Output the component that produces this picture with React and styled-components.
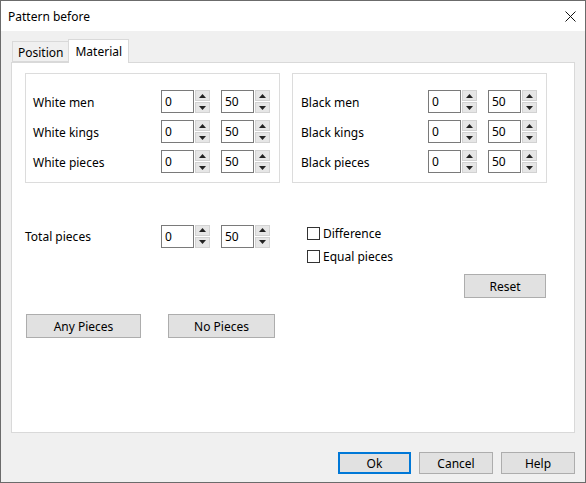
import React from "react";
import styled, { createGlobalStyle, css } from "styled-components";

const Global = createGlobalStyle`
  html, body { margin: 0; padding: 0; background: #f0f0f0; }
  * { box-sizing: border-box; }
  body { font-family: "Noto Sans", "Open Sans", Arial, sans-serif; font-size: 12px; color: #000; }
`;

const Window = styled.div`
  width: 586px;
  height: 483px;
  border: 1px solid #6b6b6b;
  display: flex;
  flex-direction: column;
  background: #f0f0f0;
  overflow: hidden;
`;

const TitleBar = styled.div`
  height: 30px;
  flex: none;
  background: #fff;
  display: flex;
  align-items: center;
  justify-content: space-between;
  padding: 0 9px 0 7px;
  font-size: 12px;
`;

const Body = styled.div`
  flex: 1;
  display: flex;
  flex-direction: column;
  padding: 8px 10px 0 10px;
`;

const TabRow = styled.div`
  display: flex;
  align-items: flex-end;
  height: 23px;
  padding-left: 1px;
  position: relative;
  z-index: 1;
`;

const Tab = styled.div`
  height: ${(p) => (p.$active ? 24 : 21)}px;
  padding: 0 ${(p) => (p.$active ? 6 : 5)}px;
  border: 1px solid #d9d9d9;
  border-bottom: ${(p) => (p.$active ? "none" : "1px solid #d9d9d9")};
  background: ${(p) => (p.$active ? "#fff" : "#f0f0f0")};
  margin-bottom: ${(p) => (p.$active ? -1 : 0)}px;
  display: flex;
  align-items: center;
  padding-top: ${(p) => (p.$active ? 0 : 1)}px;
  ${(p) => !p.$active && css`border-right: none;`}
`;

const Panel = styled.div`
  height: 371px;
  border: 1px solid #d9d9d9;
  background: #fff;
  padding: 10px 13px;
`;

const GroupRow = styled.div`
  display: flex;
  gap: 12px;
`;

const GroupBox = styled.div`
  width: 255px;
  height: 110px;
  border: 1px solid #dcdcdc;
  padding: 16px 0 0 ${(p) => p.$pl}px;
  display: grid;
  grid-template-columns: ${(p) => p.$label}px 33px 16px 44px 16px;
  grid-auto-rows: 23px;
  row-gap: 7px;
  align-content: start;
  align-items: center;
`;

const Label = styled.span`
  white-space: nowrap;
  padding-top: 1px;
`;

const Input = styled.div`
  width: 33px;
  height: 23px;
  border: 1px solid #7a7a7a;
  background: #fff;
  padding-left: 3px;
  display: flex;
  align-items: center;
  justify-self: ${(p) => (p.$second ? "end" : "start")};
`;

const SpinWrap = styled.div`
  width: 16px;
  height: 23px;
  display: flex;
  flex-direction: column;
  gap: 1px;
  padding-left: 1px;
`;

const SpinBtn = styled.div`
  flex: 1;
  background: #e6e6e6;
  border: 1px solid #d2d2d2;
  display: flex;
  align-items: center;
  justify-content: center;
`;

const Arrow = ({ down }) => (
  <svg width="7" height="4" viewBox="0 0 7 4">
    <path d={down ? "M0 0 L7 0 L3.5 4 Z" : "M0 4 L7 4 L3.5 0 Z"} fill="#222" />
  </svg>
);

const Spinner = () => (
  <SpinWrap>
    <SpinBtn><Arrow /></SpinBtn>
    <SpinBtn><Arrow down /></SpinBtn>
  </SpinWrap>
);

const RangeCells = ({ lo, hi }) => (
  <>
    <Input>{lo}</Input>
    <Spinner />
    <Input $second>{hi}</Input>
    <Spinner />
  </>
);

const Middle = styled.div`
  display: flex;
  margin-top: 41px;
`;

const LeftCol = styled.div`
  width: 267px;
  display: flex;
  flex-direction: column;
`;

const TotalRow = styled.div`
  display: grid;
  grid-template-columns: 136px 33px 16px 44px 16px;
  height: 24px;
  align-items: center;
`;

const BtnRow = styled.div`
  display: flex;
  margin-top: 66px;
  padding-left: 1px;
  gap: 27px;
`;

const Button = styled.div`
  width: ${(p) => p.$w}px;
  height: ${(p) => p.$h || 23}px;
  background: #e1e1e1;
  border: 1px solid #adadad;
  display: flex;
  align-items: center;
  justify-content: center;
  font-size: 12px;
  ${(p) =>
    p.$default &&
    css`
      border: 2px solid #0078d7;
    `}
`;

const RightCol = styled.div`
  width: 255px;
  display: flex;
  flex-direction: column;
  padding-left: 15px;
  padding-top: 3px;
`;

const CheckRow = styled.label`
  display: flex;
  align-items: center;
  gap: 3px;
  height: 13px;
  margin-bottom: 10px;
`;

const Box = styled.span`
  width: 13px;
  height: 13px;
  border: 1px solid #333;
  background: #fff;
  flex: none;
`;

const ResetWrap = styled.div`
  display: flex;
  justify-content: flex-end;
  margin-top: 1px;
  padding-right: 1px;
`;

const Footer = styled.div`
  display: flex;
  justify-content: flex-end;
  gap: 8px;
  margin-top: 19px;
`;

const CloseIcon = () => (
  <svg width="11" height="11" viewBox="0 0 11 11">
    <path d="M0.5 0.5 L10.5 10.5 M10.5 0.5 L0.5 10.5" stroke="#111" strokeWidth="1" />
  </svg>
);

const rowsW = [
  ["White men", "0", "50"],
  ["White kings", "0", "50"],
  ["White pieces", "0", "50"],
];
const rowsB = [
  ["Black men", "0", "50"],
  ["Black kings", "0", "50"],
  ["Black pieces", "0", "50"],
];

const Group = ({ rows, pl, label }) => (
  <GroupBox $pl={pl} $label={label}>
    {rows.map(([l, a, b]) => (
      <React.Fragment key={l}>
        <Label>{l}</Label>
        <RangeCells lo={a} hi={b} />
      </React.Fragment>
    ))}
  </GroupBox>
);

export default function App() {
  return (
    <>
      <Global />
      <Window>
        <TitleBar>
          <span>Pattern before</span>
          <CloseIcon />
        </TitleBar>
        <Body>
          <TabRow>
            <Tab>Position</Tab>
            <Tab $active>Material</Tab>
          </TabRow>
          <Panel>
            <GroupRow>
              <Group rows={rowsW} pl={7} label={128} />
              <Group rows={rowsB} pl={8} label={127} />
            </GroupRow>
            <Middle>
              <LeftCol>
                <TotalRow>
                  <Label>Total pieces</Label>
                  <RangeCells lo="0" hi="50" />
                </TotalRow>
                <BtnRow>
                  <Button $w={115} $h={24}>Any Pieces</Button>
                  <Button $w={107} $h={24}>No Pieces</Button>
                </BtnRow>
              </LeftCol>
              <RightCol>
                <CheckRow><Box />Difference</CheckRow>
                <CheckRow><Box />Equal pieces</CheckRow>
                <ResetWrap>
                  <Button $w={82} $h={24}>Reset</Button>
                </ResetWrap>
              </RightCol>
            </Middle>
          </Panel>
          <Footer>
            <Button $w={73} $h={22} $default>Ok</Button>
            <Button $w={74} $h={22}>Cancel</Button>
            <Button $w={74} $h={22}>Help</Button>
          </Footer>
        </Body>
      </Window>
    </>
  );
}
